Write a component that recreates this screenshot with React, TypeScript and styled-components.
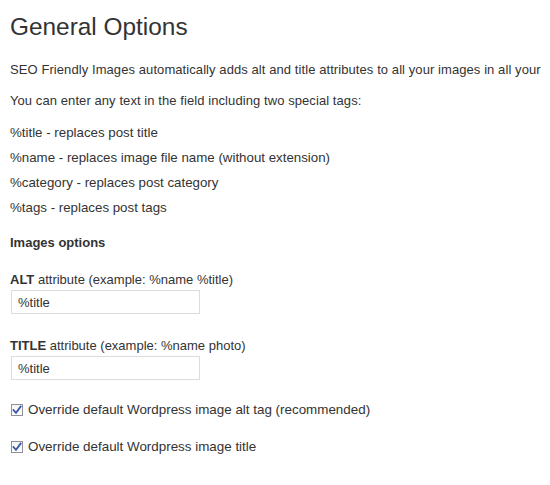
import React from "react";
import styled, { createGlobalStyle } from "styled-components";

const Global = createGlobalStyle`
  html, body { margin: 0; padding: 0; background: #ffffff; }
  body { font-family: "Liberation Sans", Arial, sans-serif; color: #333333; }
`;

const Page = styled.div`
  display: flex;
  flex-direction: column;
  padding: 12px 10px 0 10px;
  width: 550px;
  box-sizing: border-box;
  overflow: hidden;
`;

const Title = styled.h2`
  margin: 0;
  font-size: 24.4px;
  font-weight: normal;
  line-height: 30px;
  color: #333333;
  white-space: nowrap;
`;

const Para = styled.p<{ $mt: number }>`
  margin: ${(p) => p.$mt}px 0 0 0;
  font-size: 13px;
  letter-spacing: 0.08px;
  line-height: 20px;
  white-space: nowrap;
`;

const TagList = styled.ul`
  list-style: none;
  margin: 9px 0 0 0;
  padding: 0;
  display: flex;
  flex-direction: column;
`;

const TagItem = styled.li`
  font-size: 13.3px;
  line-height: 25px;
`;

const SectionTitle = styled.h3`
  margin: 13px 0 0 0;
  font-size: 13px;
  font-weight: bold;
  line-height: 20px;
`;

const Field = styled.div<{ $mt: number }>`
  display: flex;
  flex-direction: column;
  margin-top: ${(p) => p.$mt}px;
`;

const Label = styled.label`
  font-size: 13px;
  line-height: 18px;
  b { font-weight: bold; }
`;

const TextInput = styled.input`
  box-sizing: border-box;
  width: 189px;
  height: 24px;
  margin: 1px 0 0 1px;
  padding: 0 6px;
  border: 1px solid #dcdcdc;
  background: #ffffff;
  font-family: "Liberation Sans", Arial, sans-serif;
  font-size: 13px;
  color: #333333;
  outline: none;
`;

const CheckRow = styled.label<{ $mt: number }>`
  display: flex;
  align-items: center;
  gap: 5px;
  margin-top: ${(p) => p.$mt}px;
  padding-left: 1px;
  font-size: 13.4px;
  line-height: 20px;
`;

const Box = styled.span`
  display: inline-flex;
  width: 12px;
  height: 12px;
  box-sizing: border-box;
  border: 1px solid #8f8f9d;
  background: linear-gradient(#f4f4f4, #ffffff);
  align-items: center;
  justify-content: center;
`;

const CheckBox = () => (
  <Box>
    <svg width="10" height="10" viewBox="0 0 10 10">
      <path d="M1.5 5 L4 7.8 L8.6 1.6" fill="none" stroke="#3b57a7" strokeWidth="1.8" strokeLinecap="square" />
    </svg>
  </Box>
);

export default function App() {
  return (
    <>
      <Global />
      <Page>
        <Title>General Options</Title>
        <Para $mt={18}>
          SEO Friendly Images automatically adds alt and title attributes to all your images in all your
        </Para>
        <Para $mt={11}>You can enter any text in the field including two special tags:</Para>
        <TagList>
          <TagItem>%title - replaces post title</TagItem>
          <TagItem>%name - replaces image file name (without extension)</TagItem>
          <TagItem>%category - replaces post category</TagItem>
          <TagItem>%tags - replaces post tags</TagItem>
        </TagList>
        <SectionTitle>Images options</SectionTitle>
        <Field $mt={18}>
          <Label>
            <b>ALT</b> attribute (example: %name %title)
          </Label>
          <TextInput defaultValue="%title" />
        </Field>
        <Field $mt={23}>
          <Label>
            <b>TITLE</b> attribute (example: %name photo)
          </Label>
          <TextInput defaultValue="%title" />
        </Field>
        <CheckRow $mt={20}>
          <CheckBox />
          Override default Wordpress image alt tag (recommended)
        </CheckRow>
        <CheckRow $mt={17}>
          <CheckBox />
          Override default Wordpress image title
        </CheckRow>
      </Page>
    </>
  );
}
